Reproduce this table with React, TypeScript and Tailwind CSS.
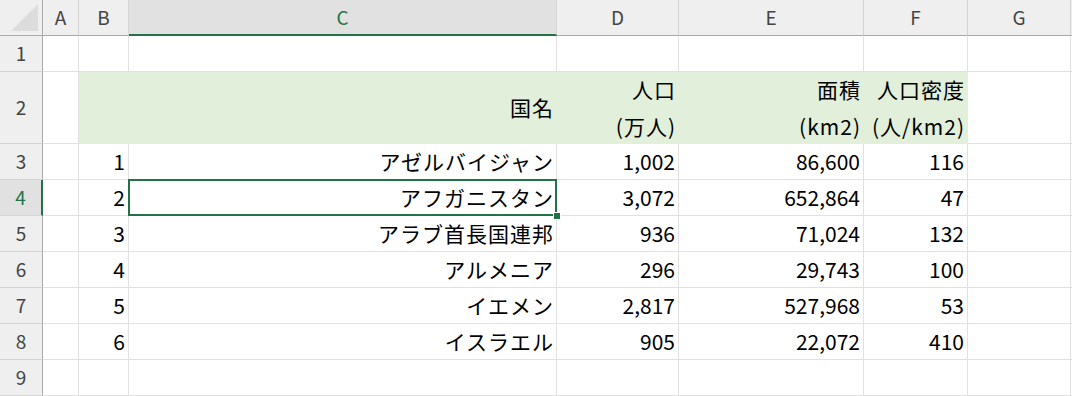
import React from "react"

const cols = ["A", "B", "C", "D", "E", "F", "G"]

type Row = { n: number; h: string; cells: (string | string[])[] }

const rows: Row[] = [
    { n: 1, h: "h-[36px]", cells: ["", "", "", "", "", "", ""] },
    { n: 2, h: "h-[72px]", cells: ["", "", "国名", ["人口", "(万人)"], ["面積", "(km2)"], ["人口密度", "(人/km2)"], ""] },
    { n: 3, h: "h-[36px]", cells: ["", "1", "アゼルバイジャン", "1,002", "86,600", "116", ""] },
    { n: 4, h: "h-[36px]", cells: ["", "2", "アフガニスタン", "3,072", "652,864", "47", ""] },
    { n: 5, h: "h-[36px]", cells: ["", "3", "アラブ首長国連邦", "936", "71,024", "132", ""] },
    { n: 6, h: "h-[36px]", cells: ["", "4", "アルメニア", "296", "29,743", "100", ""] },
    { n: 7, h: "h-[36px]", cells: ["", "5", "イエメン", "2,817", "527,968", "53", ""] },
    { n: 8, h: "h-[36px]", cells: ["", "6", "イスラエル", "905", "22,072", "410", ""] },
    { n: 9, h: "h-[36px]", cells: ["", "", "", "", "", "", ""] },
]

const widths = ["w-[36px]", "w-[50px]", "w-[428px]", "w-[122px]", "w-[185px]", "w-[104px]", "w-[103px]"]

export default function App() {
    return (
        <div className="w-[1072px] h-[396px] overflow-hidden bg-white text-[21px] text-black font-['Noto_Sans_CJK_JP','Noto_Sans',sans-serif]">
            {/* column headers */}
            <div className="flex h-[36px]">
                <div className="relative w-[43px] shrink-0 bg-[#efefef] border-r border-b border-[#ababab]">
                    <div className="absolute right-[4px] bottom-[4px] w-0 h-0 border-l-[27px] border-l-transparent border-b-[27px] border-b-[#dcdcdc]" />
                </div>
                {cols.map((c, i) => (
                    <div
                        key={c}
                        className={`${widths[i]} shrink-0 flex items-center justify-center text-[19px] border-r border-[#d4d4d4] ${
                            c === "C"
                                ? "bg-[#e1e1e1] text-[#217346] border-b-2 border-b-[#217346]"
                                : "bg-[#efefef] text-[#444] border-b border-b-[#ababab]"
                        }`}
                    >
                        {c}
                    </div>
                ))}
                <div className="flex-1 bg-[#efefef] border-b border-[#ababab]" />
            </div>

            {rows.map((r) => (
                <div key={r.n} className={`flex ${r.h}`}>
                    <div
                        className={`w-[43px] shrink-0 flex items-center justify-center text-[19px] border-b border-[#d4d4d4] ${
                            r.n === 4
                                ? "bg-[#e1e1e1] text-[#217346] border-r-2 border-r-[#217346]"
                                : "bg-[#efefef] text-[#444] border-r border-r-[#ababab]"
                        }`}
                    >
                        {r.n}
                    </div>
                    {r.cells.map((v, i) => {
                        const filled = r.n === 2 && i >= 1 && i <= 5
                        const selected = r.n === 4 && i === 2
                        const wide = i === 2 || (r.n === 2 && i >= 3)
                        return (
                            <div
                                key={i}
                                className={`relative ${widths[i]} shrink-0 flex flex-col justify-center items-end leading-[37px] whitespace-nowrap ${
                                    wide ? "pr-[2px] tracking-[1px]" : "pr-[3px]"
                                } ${filled ? "bg-[#e2efda] border-b border-r border-[#e2efda]" : "border-b border-r border-[#e1e1e1]"}`}
                            >
                                {Array.isArray(v) ? v.map((t) => <span key={t}>{t}</span>) : <span>{v}</span>}
                                {selected && (
                                    <>
                                        <div className="absolute -left-[1px] -top-[1px] -right-[1px] -bottom-[1px] border-2 border-[#217346] pointer-events-none" />
                                        <div className="absolute z-10 -right-[5px] -bottom-[5px] w-[8px] h-[8px] bg-[#217346] border border-white" />
                                    </>
                                )}
                            </div>
                        )
                    })}
                    <div className="flex-1 border-b border-[#e1e1e1]" />
                </div>
            ))}
        </div>
    )
}
